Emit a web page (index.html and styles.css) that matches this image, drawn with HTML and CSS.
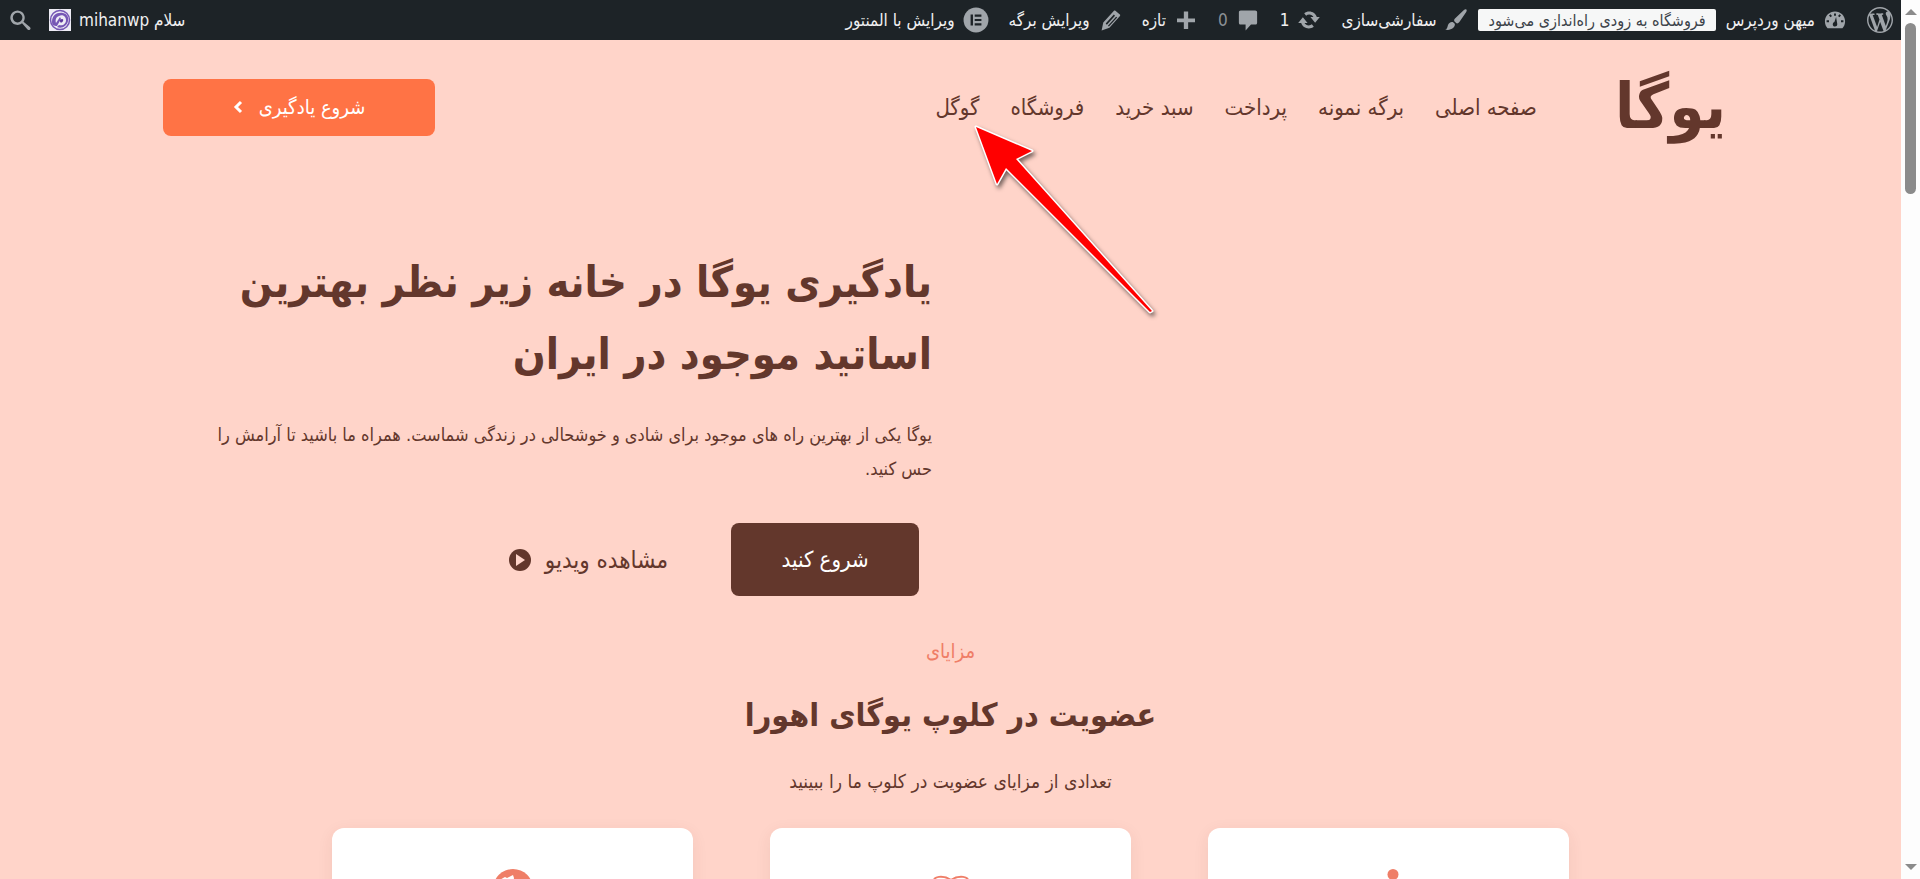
FILE: index.html
```html
<!DOCTYPE html>
<html lang="fa" dir="rtl">
<head>
<meta charset="utf-8">
<title>یوگا</title>
<link rel="stylesheet" href="styles.css">
</head>
<body>
<div class="shell">
  <div class="scrollbar" aria-hidden="true">
    <span class="scroll-up"></span>
    <span class="scroll-thumb"></span>
    <span class="scroll-down"></span>
  </div>
  <div class="page">
    <div class="adminbar">
      <ul class="admin-list">
        <li><a href="#" aria-label="وردپرس"><svg class="icon icon-lg" viewBox="0 0 20 20"><path d="M20 10c0-5.51-4.49-10-10-10C4.48 0 0 4.49 0 10c0 5.52 4.48 10 10 10 5.51 0 10-4.48 10-10zM7.78 15.37L4.37 6.22c.55-.02 1.17-.08 1.17-.08.5-.06.44-1.13-.06-1.11 0 0-1.45.11-2.37.11-.18 0-.37 0-.58-.01C4.12 2.69 6.87 1.11 10 1.11c2.33 0 4.45.87 6.05 2.34-.68-.11-1.65.39-1.65 1.58 0 .74.45 1.36.9 2.1.35.61.55 1.36.55 2.46 0 1.49-1.4 5-1.4 5l-3.03-8.37c.54-.02.82-.17.82-.17.5-.05.44-1.25-.06-1.22 0 0-1.44.12-2.38.12-.87 0-2.33-.12-2.33-.12-.5-.03-.56 1.2-.06 1.22l.92.08 1.26 3.41zM17.41 10c.24-.64.74-1.87.43-4.25.7 1.29 1.05 2.71 1.05 4.25 0 3.29-1.73 6.24-4.4 7.78.97-2.59 1.94-5.2 2.92-7.78zM6.1 18.09C3.12 16.65 1.11 13.53 1.11 10c0-1.3.23-2.48.72-3.59C3.25 10.3 4.67 14.2 6.1 18.09zm4.03-6.63l2.58 6.98c-.86.29-1.76.45-2.71.45-.79 0-1.57-.11-2.29-.33.81-2.38 1.62-4.74 2.42-7.1z"/></svg></a></li>
        <li><a href="#"><svg class="icon" viewBox="0 0 20 20"><path fill-rule="evenodd" d="M3.8 16.9C2.400 15.300 1.600 13.300 1.600 11.200 1.600 6.500 5.300 3 10 3s8.400 3.500 8.400 8.200c0 2.100-.8 4.100-2.200 5.700zM9.200 4.600h1.600v1.900H9.200zM5 6.300l1.200-1.100 1.300 1.400-1.200 1.100zM13.800 5.200 15 6.300l-1.300 1.400-1.200-1.100zM3 10.300h2v1.600H3zM15 10.300h2v1.600h-2zM10.900 7.500l.9 5.200c.5 1.600-.6 2.800-1.800 2.800s-2.200-1.100-1.800-2.400c.2-.7.800-1.200 1.300-1.400z"/></svg><span>میهن وردپرس</span></a></li>
        <li class="notice"><a href="#" class="badge">فروشگاه به زودی راه‌اندازی می‌شود</a></li>
        <li><a href="#"><svg class="icon" viewBox="0 0 20 20"><path d="M18.600 1.200c.6.600.3 1.500-.2 2.300l-5.600 8.100c-.8 1.100-1.700 1.500-2.700 1l-1.500-1.500c-.4-1 0-2 1-2.700l7-6.700c.7-.6 1.500-1 2-.5zM7.600 11.800l1.400 1.400c.7 2.800-3.700 6.200-8 4.800 1.700-.7 1.800-2 2.200-3.500.6-2.200 2.700-3.300 4.400-2.700z"/></svg><span>سفارشی‌سازی</span></a></li>
        <li><a href="#"><svg class="icon" viewBox="0 0 20 20"><path d="M10.200 3c3 0 5.400 1.800 6.300 4.500H19l-3.900 4.700-3.900-4.700h2.500c-.7-1.200-2-2-3.500-2-1 0-1.900.3-2.600.9L6 4.400C7.200 3.500 8.600 3 10.200 3zM4.900 7.800l3.900 4.700H6.300c.7 1.200 2 2 3.500 2 1 0 1.900-.3 2.600-.9l1.600 2c-1.200.9-2.600 1.400-4.200 1.400-3 0-5.400-1.800-6.300-4.500H1z"/></svg><span>1</span></a></li>
        <li><a href="#" class="muted"><svg class="icon" viewBox="0 0 20 20"><path d="M4 2h12c1 0 1.600.6 1.600 1.500v8.700c0 1-.6 1.600-1.600 1.600h-3.500L8 18.800v-5H4c-1 0-1.600-.6-1.600-1.600V3.500C2.400 2.600 3 2 4 2z"/></svg><span>0</span></a></li>
        <li><a href="#"><svg class="icon" viewBox="0 0 20 20"><path d="M8.200 3h3.600v5.700h5.700v3.100h-5.700v5.700H8.200v-5.700H2.500V8.700h5.700z"/></svg><span>تازه</span></a></li>
        <li><a href="#"><svg class="icon" viewBox="0 0 20 20"><path fill-rule="evenodd" d="M14.500 2.200l3.700 3.200c.4.400.4.700.1 1.200L9.500 16.400 3 18.800 4.400 12l8.900-9.700c.4-.4.800-.4 1.200-.1zM6.400 13l1 .9 6.800-7.500-1-.9zM8.300 14.700l.8.700 6.900-7.400-.9-.8z"/></svg><span>ویرایش برگه</span></a></li>
        <li><a href="#"><svg class="icon icon-lg" viewBox="0 0 24 24"><circle cx="12" cy="12" r="11.500"/><path class="cut" d="M7 7h2.200v10H7zM10.800 7H17v2h-6.200zM10.800 11H17v2h-6.200zM10.800 15H17v2h-6.200z"/></svg><span>ویرایش با المنتور</span></a></li>
      </ul>
      <ul class="admin-list admin-user">
        <li><a href="#"><span>سلام <bdi>mihanwp</bdi></span><svg class="avatar" viewBox="0 0 22 22"><rect width="22" height="22" fill="#eeecf5"/><circle cx="11" cy="11" r="9.500" fill="#eeecf5" stroke="#7657b5" stroke-width="1.500"/><path d="M3 13C3 6 8 3 14 4c4 1 6 4 5 8-1 5-6 8-11 6l2-2c4 1 7-1 7-5s-4-6-7-4c-3 1-4 4-3 7l4-6 1 2-4 7c-3 0-5-1-5-4z" fill="#7657b5"/><path d="M11 11c2-2 4-1 3 1s-3 2-3 0" fill="#5b369c"/></svg></a></li>
        <li><a href="#" aria-label="جستجو"><svg class="icon" viewBox="0 0 20 20"><path fill-rule="evenodd" d="M12.900 11.500l5.300 4.300c.7.700.8 1.500.2 2.100-.6.700-1.500.6-2.100 0l-4.600-5.100a6 6 0 1 1 1.200-1.300zM8 12a4 4 0 1 0 0-8 4 4 0 0 0 0 8z"/></svg></a></li>
      </ul>
    </div>

    <header class="header">
      <a href="#" class="logo">یوگا</a>
      <nav class="nav">
        <a href="#">صفحه اصلی</a>
        <a href="#">برگه نمونه</a>
        <a href="#">پرداخت</a>
        <a href="#">سبد خرید</a>
        <a href="#">فروشگاه</a>
        <a href="#" class="marked">گوگل<svg class="arrow" viewBox="0 0 190 200"><path d="M7 7 63 31 47 39 183 191 181 192 37 48 28 64Z"/></svg></a>
      </nav>
      <button type="button" class="btn btn-learn"><span>شروع یادگیری</span><svg class="chevron" viewBox="0 0 10 14"><path d="M8 2 3 7l5 5"/></svg></button>
    </header>

    <main>
      <section class="hero">
        <div class="hero-text">
          <h1>یادگیری یوگا در خانه زیر نظر بهترین<br>اساتید موجود در ایران</h1>
          <p>یوگا یکی از بهترین راه های موجود برای شادی و خوشحالی در زندگی شماست. همراه ما باشید تا آرامش را<br>حس کنید.</p>
          <div class="actions">
            <button type="button" class="btn btn-start">شروع کنید</button>
            <a href="#" class="video"><span>مشاهده ویدیو</span><svg class="play" viewBox="0 0 22 22"><circle cx="11" cy="11" r="11"/><path d="M7 5v12l9-6z"/></svg></a>
          </div>
        </div>
      </section>

      <section class="benefits">
        <p class="eyebrow">مزایای</p>
        <h2>عضویت در کلوپ یوگای اهورا</h2>
        <p class="lead">تعدادی از مزایای عضویت در کلوپ ما را ببینید</p>
        <div class="cards">
          <article class="card"><svg class="card-icon" viewBox="0 0 40 40"><circle cx="24" cy="5.500" r="5.500"/><path d="M21 12l8 2 3 7 5 3-2 3-6-4-2-3-2 8 5 5 2 9h-5l-2-7-7-7 3-11-4 2-2 6H11l3-8z"/></svg></article>
          <article class="card"><svg class="card-icon" viewBox="0 0 40 40"><path class="line" d="M4 34V13C0 7 13 6 20 11c7-5 20-4 16 2v21c-5-3-12-2-16 1-4-3-11-4-16-1zM20 11v24M6 12c3-2 8-1 11 1M23 13c3-2 8-3 11-1"/></svg></article>
          <article class="card"><svg class="card-icon" viewBox="0 0 40 40"><circle cx="20" cy="20" r="20"/><path class="land" d="M18 7l2-1 1 3-1 5-5 1-3 5 5 1 5 6-3 8-5-4-3-9-7-4c0-4 3-8 8-10l2 1zM29 20l7-2-1 8-6 4-2-5z"/></svg></article>
        </div>
      </section>
    </main>
  </div>
</div>
</body>
</html>
```
FILE: styles.css
```css
* { box-sizing: border-box; }

body {
  margin: 0;
  font-family: "DejaVu Sans Condensed", "DejaVu Sans", sans-serif;
  color: #63372c;
  background: #ffd4c9;
}

a { color: inherit; text-decoration: none; }
h1, h2, p, ul { margin: 0; padding: 0; }
svg { display: block; flex: none; }

.shell {
  display: grid;
  grid-template-columns: 19px minmax(0, 1fr);
  height: 100vh;
}

.page { overflow: hidden; }

/* scrollbar */
.scrollbar {
  display: flex;
  flex-direction: column;
  align-items: center;
  padding: 9px 0;
  background: #fdfdfd;
}
.scroll-up, .scroll-down {
  border: 6px solid transparent;
  border-top: 0;
  border-bottom: 6px solid #8b8b8b;
}
.scroll-down {
  margin-top: auto;
  border-top: 6px solid #8b8b8b;
  border-bottom: 0;
}
.scroll-thumb {
  width: 11px;
  height: 171px;
  margin-top: 8px;
  border-radius: 6px;
  background: #8b8b8b;
}

/* admin bar */
.adminbar {
  display: flex;
  justify-content: space-between;
  height: 40px;
  padding: 0 8px;
  background: #1d2327;
  color: #f0f0f1;
  font-size: 17px;
}
.admin-list {
  display: flex;
  align-items: center;
  gap: 20px;
  list-style: none;
}
.admin-user { gap: 17px; }
.admin-list .notice { margin: 0 -10px; }
.admin-list a {
  display: flex;
  align-items: center;
  gap: 8px;
  white-space: nowrap;
}
.icon { width: 24px; height: 24px; fill: #a0a5aa; }
.icon-lg { width: 26px; height: 26px; }
.cut { fill: #1d2327; }
.avatar { width: 22px; height: 22px; }
.muted { color: #8c9196; }
.admin-list .badge {
  height: 22px;
  padding: 0 10px;
  border-radius: 2px;
  background: #f6f7f7;
  color: #3c434a;
  font-size: 16px;
}

/* header */
.header {
  display: flex;
  align-items: center;
  height: 134px;
  padding: 0 163px;
}
.logo {
  padding: 0 12px;
  font-size: 63px;
  font-weight: 700;
  line-height: 80px;
}
.nav {
  display: flex;
  flex: 1;
  gap: 31px;
  padding: 0 66px;
  font-size: 22px;
  white-space: nowrap;
}
.marked { position: relative; }
.arrow {
  position: absolute;
  top: 25px;
  left: 34px;
  width: 190px;
  height: 200px;
  fill: #f00;
  stroke: #fff;
  stroke-width: 3;
  stroke-linejoin: round;
  paint-order: stroke;
  filter: drop-shadow(2px 3px 2px #0008);
}
.btn {
  display: flex;
  align-items: center;
  justify-content: center;
  border: 0;
  border-radius: 8px;
  color: #fff;
  font-family: inherit;
  font-size: 22px;
}
.btn-learn {
  gap: 16px;
  width: 272px;
  height: 57px;
  background: #ff7345;
  font-size: 20px;
}
.chevron {
  width: 10px;
  height: 14px;
  fill: none;
  stroke: #fff;
  stroke-width: 3;
}

/* hero */
.hero {
  display: flex;
  justify-content: flex-end;
  padding: 72px 163px 0;
}
.hero-text { width: 769px; }
h1 { font-size: 43px; line-height: 72px; white-space: nowrap; }
.hero-text p {
  margin-top: 28px;
  font-size: 18px;
  line-height: 34px;
  white-space: nowrap;
}
.actions {
  display: flex;
  align-items: center;
  gap: 63px;
  margin-top: 37px;
  padding: 0 13px;
}
.btn-start { width: 188px; height: 73px; background: #63372c; }
.video { display: flex; align-items: center; gap: 14px; font-size: 24px; }
.play { width: 22px; height: 22px; fill: #63372c; }
.play path { fill: #ffd4c9; }

/* benefits */
.benefits { padding-top: 37px; text-align: center; }
.eyebrow { color: #ef7e67; font-size: 20px; line-height: 36px; }
h2 { margin-top: 18px; font-size: 32px; line-height: 56px; }
.lead { margin-top: 20px; font-size: 19px; line-height: 36px; }
.cards {
  display: grid;
  grid-template-columns: repeat(3, 361px);
  gap: 77px;
  justify-content: center;
  margin-top: 29px;
}
.card {
  display: flex;
  justify-content: center;
  height: 280px;
  padding-top: 41px;
  border-radius: 12px;
  background: #fff;
  box-shadow: 0 4px 16px #63372c14;
}
.card-icon { width: 40px; height: 40px; fill: #ef7e67; }
.land { fill: #fff; }
.line { fill: none; stroke: #ef7e67; stroke-width: 2; }
```
